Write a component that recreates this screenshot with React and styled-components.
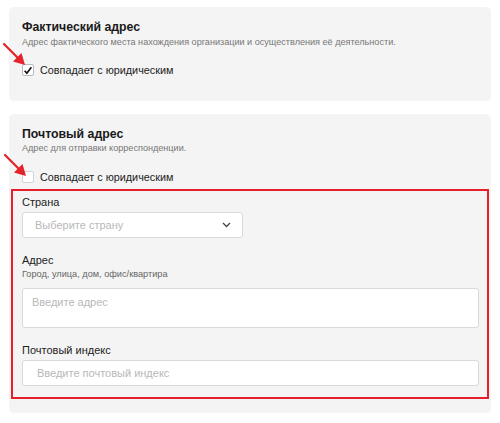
import React from 'react'
import styled, { createGlobalStyle } from 'styled-components'

const GlobalStyle = createGlobalStyle`
    body {
        margin: 0;
        background: #fff;
        font-family: "Liberation Sans", Arial, sans-serif;
        color: #222;
    }
`;

function Arrow({ top, left }) {
    return (
        <ArrowStyled $top={top} $left={left} width="26" height="26" viewBox="0 0 26 26">
            <line x1="2" y1="2" x2="17" y2="17" stroke="#e5232b" strokeWidth="2.2" strokeLinecap="round" />
            <polygon points="23,23 11,19.5 19.5,11" fill="#e5232b" />
        </ArrowStyled>
    )
}

function Checkbox({ checked, label }) {
    return (
        <CheckRow>
            <Box $checked={checked}>
                {checked && (
                    <svg width="11" height="11" viewBox="0 0 11 11">
                        <path d="M1.8 5.8 L4.2 8.4 L9.2 1.8" fill="none" stroke="#111" strokeWidth="1.8" />
                    </svg>
                )}
            </Box>
            <span>{label}</span>
        </CheckRow>
    )
}

function App() {
    return (
        <Page>
            <GlobalStyle />
            <Card $bottom={24}>
                <Title>Фактический адрес</Title>
                <Hint>Адрес фактического места нахождения организации и осуществления её деятельности.</Hint>
                <Checkbox checked label="Совпадает с юридическим" />
            </Card>

            <Card $bottom={14}>
                <Title>Почтовый адрес</Title>
                <Hint>Адрес для отправки корреспонденции.</Hint>
                <Checkbox label="Совпадает с юридическим" />

                <Highlight>
                    <Field>
                        <Label>Страна</Label>
                        <Select>
                            <span>Выберите страну</span>
                            <svg width="9" height="6" viewBox="0 0 9 6">
                                <path d="M1 1 L4.5 4.5 L8 1" fill="none" stroke="#444" strokeWidth="1.3" />
                            </svg>
                        </Select>
                    </Field>
                    <Field>
                        <Label>Адрес</Label>
                        <SubLabel>Город, улица, дом, офис/квартира</SubLabel>
                        <TextArea placeholder="Введите адрес" />
                    </Field>
                    <Field>
                        <Label>Почтовый индекс</Label>
                        <Input placeholder="Введите почтовый индекс" />
                    </Field>
                </Highlight>
            </Card>

            <Arrow top={42} left={2} />
            <Arrow top={153} left={3} />
        </Page>
    )
}

const Page = styled.div`
    position: relative;
    padding: 7px 9px;
    display: flex;
    flex-direction: column;
    gap: 13px;
`;

const Card = styled.div`
    background: #f4f4f4;
    border-radius: 5px;
    padding: 12px 13px ${p => p.$bottom}px;
`;

const Title = styled.h3`
    margin: 0;
    font-size: 12.3px;
    line-height: 17px;
    font-weight: 700;
    color: #1a1a1a;
`;

const Hint = styled.div`
    margin-top: 0.5px;
    font-size: 9.1px;
    line-height: 11px;
    color: #777;
`;

const CheckRow = styled.label`
    display: flex;
    align-items: center;
    gap: 6px;
    margin-top: 16px;
    height: 13px;
    font-size: 10.8px;
    color: #222;
`;

const Box = styled.span`
    width: 12px;
    height: 12px;
    box-sizing: border-box;
    border: 1px solid ${p => p.$checked ? '#bbb' : '#d4d4d4'};
    border-radius: 2px;
    background: #fff;
    display: flex;
    align-items: center;
    justify-content: center;
`;

const Highlight = styled.div`
    margin: 6px -11px 0;
    border: 2px solid #e5202a;
    padding: 5px 8px 11px 9px;
    display: flex;
    flex-direction: column;
    gap: 16px;
`;

const Field = styled.div`
    display: flex;
    flex-direction: column;
`;

const Label = styled.div`
    font-size: 11px;
    line-height: 13px;
    color: #222;
    margin-bottom: 3px;
`;

const SubLabel = styled.div`
    font-size: 9.2px;
    line-height: 11px;
    color: #666;
    margin: -1px 0 8px;
`;

const fieldBase = `
    box-sizing: border-box;
    background: #fff;
    border: 1px solid #dadada;
    border-radius: 3px;
    font-family: "Liberation Sans", Arial, sans-serif;
    font-size: 11px;
    color: #222;
    outline: none;
    &::placeholder { color: #b8b8b8; }
`;

const Select = styled.div`
    ${fieldBase}
    width: 221px;
    height: 26px;
    padding: 0 11px 0 12px;
    display: flex;
    align-items: center;
    justify-content: space-between;
    span { color: #b8b8b8; }
`;

const TextArea = styled.textarea`
    ${fieldBase}
    height: 40px;
    padding: 7px 9px;
    resize: none;
`;

const Input = styled.input`
    ${fieldBase}
    height: 26px;
    padding: 0 14px;
`;

const ArrowStyled = styled.svg`
    position: absolute;
    top: ${p => p.$top}px;
    left: ${p => p.$left}px;
`;

export default App
